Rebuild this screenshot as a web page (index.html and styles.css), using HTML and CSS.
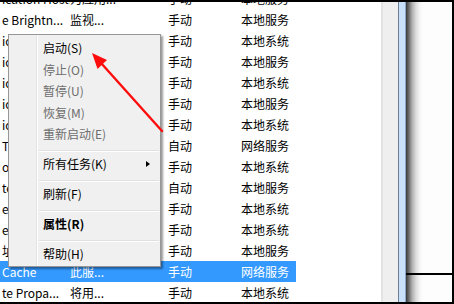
FILE: index.html
```html
<!DOCTYPE html>
<html lang="zh-CN">
<head>
<meta charset="utf-8">
<link rel="stylesheet" href="styles.css">
</head>
<body>
<div class="screen">
  <div class="pane">
    <div class="list">
      <div class="rows">
        <div class="row"><span class="c-name">ication Host...</span><span class="c-desc">为应用...</span><span>手动</span><span>本地服务</span></div>
        <div class="row"><span class="c-name">e Brightn...</span><span class="c-desc">监视...</span><span>手动</span><span>本地服务</span></div>
        <div class="row"><span class="c-name">ication Ex...</span><span class="c-desc">处理...</span><span>手动</span><span>本地系统</span></div>
        <div class="row"><span class="c-name">ication Id...</span><span class="c-desc">确定...</span><span>手动</span><span>本地服务</span></div>
        <div class="row"><span class="c-name">ication In...</span><span class="c-desc">为使...</span><span>手动</span><span>本地系统</span></div>
        <div class="row"><span class="c-name">ication La...</span><span class="c-desc">为 In...</span><span>手动</span><span>本地服务</span></div>
        <div class="row"><span class="c-name">ication M...</span><span class="c-desc">为通...</span><span>手动</span><span>本地系统</span></div>
        <div class="row"><span class="c-name">Taskbar...</span><span class="c-desc">提供...</span><span>自动</span><span>网络服务</span></div>
        <div class="row"><span class="c-name">ound Int...</span><span class="c-desc">使用...</span><span>手动</span><span>本地系统</span></div>
        <div class="row"><span class="c-name">te Filter...</span><span class="c-desc">基本...</span><span>自动</span><span>本地服务</span></div>
        <div class="row"><span class="c-name">er Engine...</span><span class="c-desc">处理...</span><span>手动</span><span>本地系统</span></div>
        <div class="row"><span class="c-name">evelopm...</span><span class="c-desc">为...</span><span>手动</span><span>本地系统</span></div>
        <div class="row"><span class="c-name">址编码...</span><span class="c-desc">为...</span><span>手动</span><span>本地服务</span></div>
        <div class="row selected"><span class="c-name">Cache</span><span class="c-desc">此服...</span><span>手动</span><span>网络服务</span></div>
        <div class="row"><span class="c-name">te Propa...</span><span class="c-desc">将用...</span><span>手动</span><span>本地系统</span></div>
      </div>
    </div>
    <div class="gutter"></div>
    <div class="splitter"></div>
    <div class="side">
      <div class="side-top"></div>
      <div class="side-bottom"></div>
    </div>
  </div>

  <div class="menu">
    <div class="item">启动(S)</div>
    <div class="item disabled">停止(O)</div>
    <div class="item disabled">暂停(U)</div>
    <div class="item disabled">恢复(M)</div>
    <div class="item disabled">重新启动(E)</div>
    <div class="sep"></div>
    <div class="item sub"><span>所有任务(K)</span><span class="tri"></span></div>
    <div class="sep"></div>
    <div class="item">刷新(F)</div>
    <div class="sep"></div>
    <div class="item bold">属性(R)</div>
    <div class="sep"></div>
    <div class="item">帮助(H)</div>
  </div>

  <svg class="arrow" width="454" height="304" viewBox="0 0 454 304">
    <line x1="162" y1="131" x2="101" y2="63" stroke="#ff0d0d" stroke-width="2.4" stroke-linecap="round"/>
    <polygon points="92,53 107,60 97.5,69" fill="#ff0d0d"/>
  </svg>
</div>
</body>
</html>
```

FILE: styles.css
```css
html, body {
  margin: 0;
  padding: 0;
  background: #ffffff;
}

.screen {
  position: relative;
  width: 454px;
  height: 304px;
  overflow: hidden;
  font-family: "Noto Sans CJK SC", "Noto Sans", sans-serif;
  font-size: 12px;
  color: #000;
}

.pane {
  display: flex;
  height: 300px;
  border-top: 2px solid #000;
  border-bottom: 2px solid #000;
  border-right: 2px solid #000;
}

.list {
  width: 381px;
  flex: none;
  overflow: hidden;
  background: #fff;
}

.rows {
  margin-top: -14px;
}

.row {
  display: grid;
  grid-template-columns: 70px 98px 73px 55px;
  width: 296px;
  height: 21px;
  line-height: 21px;
  white-space: nowrap;
}

.row span {
  overflow: hidden;
}

.c-name {
  padding-left: 2px;
}

.row.selected {
  background: #3399ff;
  color: #fff;
}

.gutter {
  width: 17px;
  flex: none;
  background: linear-gradient(to right, #e3e3e3 0, #e3e3e3 2px, #efefef 2px);
}

.splitter {
  width: 6px;
  flex: none;
  background: #c9e0fa;
  border-left: 1px solid #6f7f95;
  border-right: 1px solid #8aa6c8;
}

.side {
  flex: 1;
  display: flex;
  flex-direction: column;
  background: linear-gradient(to right, #3a3a3a 0, #6e6e6e 3px, #adadad 6px, #dcdcdc 10px, #f6f6f6 14px, #fdfdfd 17px);
}

.side-top {
  height: 271px;
}

.side-bottom {
  flex: 1;
  border-top: 2px solid #000;
}

.menu {
  position: absolute;
  left: 8px;
  top: 34px;
  width: 151px;
  padding: 2px 0 1.5px;
  border: 1px solid #979797;
  background: linear-gradient(to right, transparent 27px, #e2e3e3 27px, #e2e3e3 28px, #ffffff 28px, #ffffff 29px, transparent 29px), #f0f0f0;
  box-shadow: 2px 2px 2px rgba(0, 0, 0, 0.4);
}

.item {
  height: 21.5px;
  line-height: 21.5px;
  padding-left: 34px;
  white-space: nowrap;
  color: #000;
}

.item.disabled {
  color: #6d6d6d;
}

.item.bold {
  font-weight: bold;
}

.item.sub {
  display: flex;
  align-items: center;
  justify-content: space-between;
  padding-right: 10px;
}

.tri {
  width: 0;
  height: 0;
  border-left: 4px solid #000;
  border-top: 3.5px solid transparent;
  border-bottom: 3.5px solid transparent;
}

.sep {
  height: 8.5px;
  box-sizing: border-box;
  padding-top: 5px;
  margin-left: 30px;
  margin-right: 1px;
}

.sep::before {
  content: "";
  display: block;
  height: 1px;
  background: #e0e0e0;
  border-bottom: 1px solid #ffffff;
}

.arrow {
  position: absolute;
  left: 0;
  top: 0;
  pointer-events: none;
}
```
